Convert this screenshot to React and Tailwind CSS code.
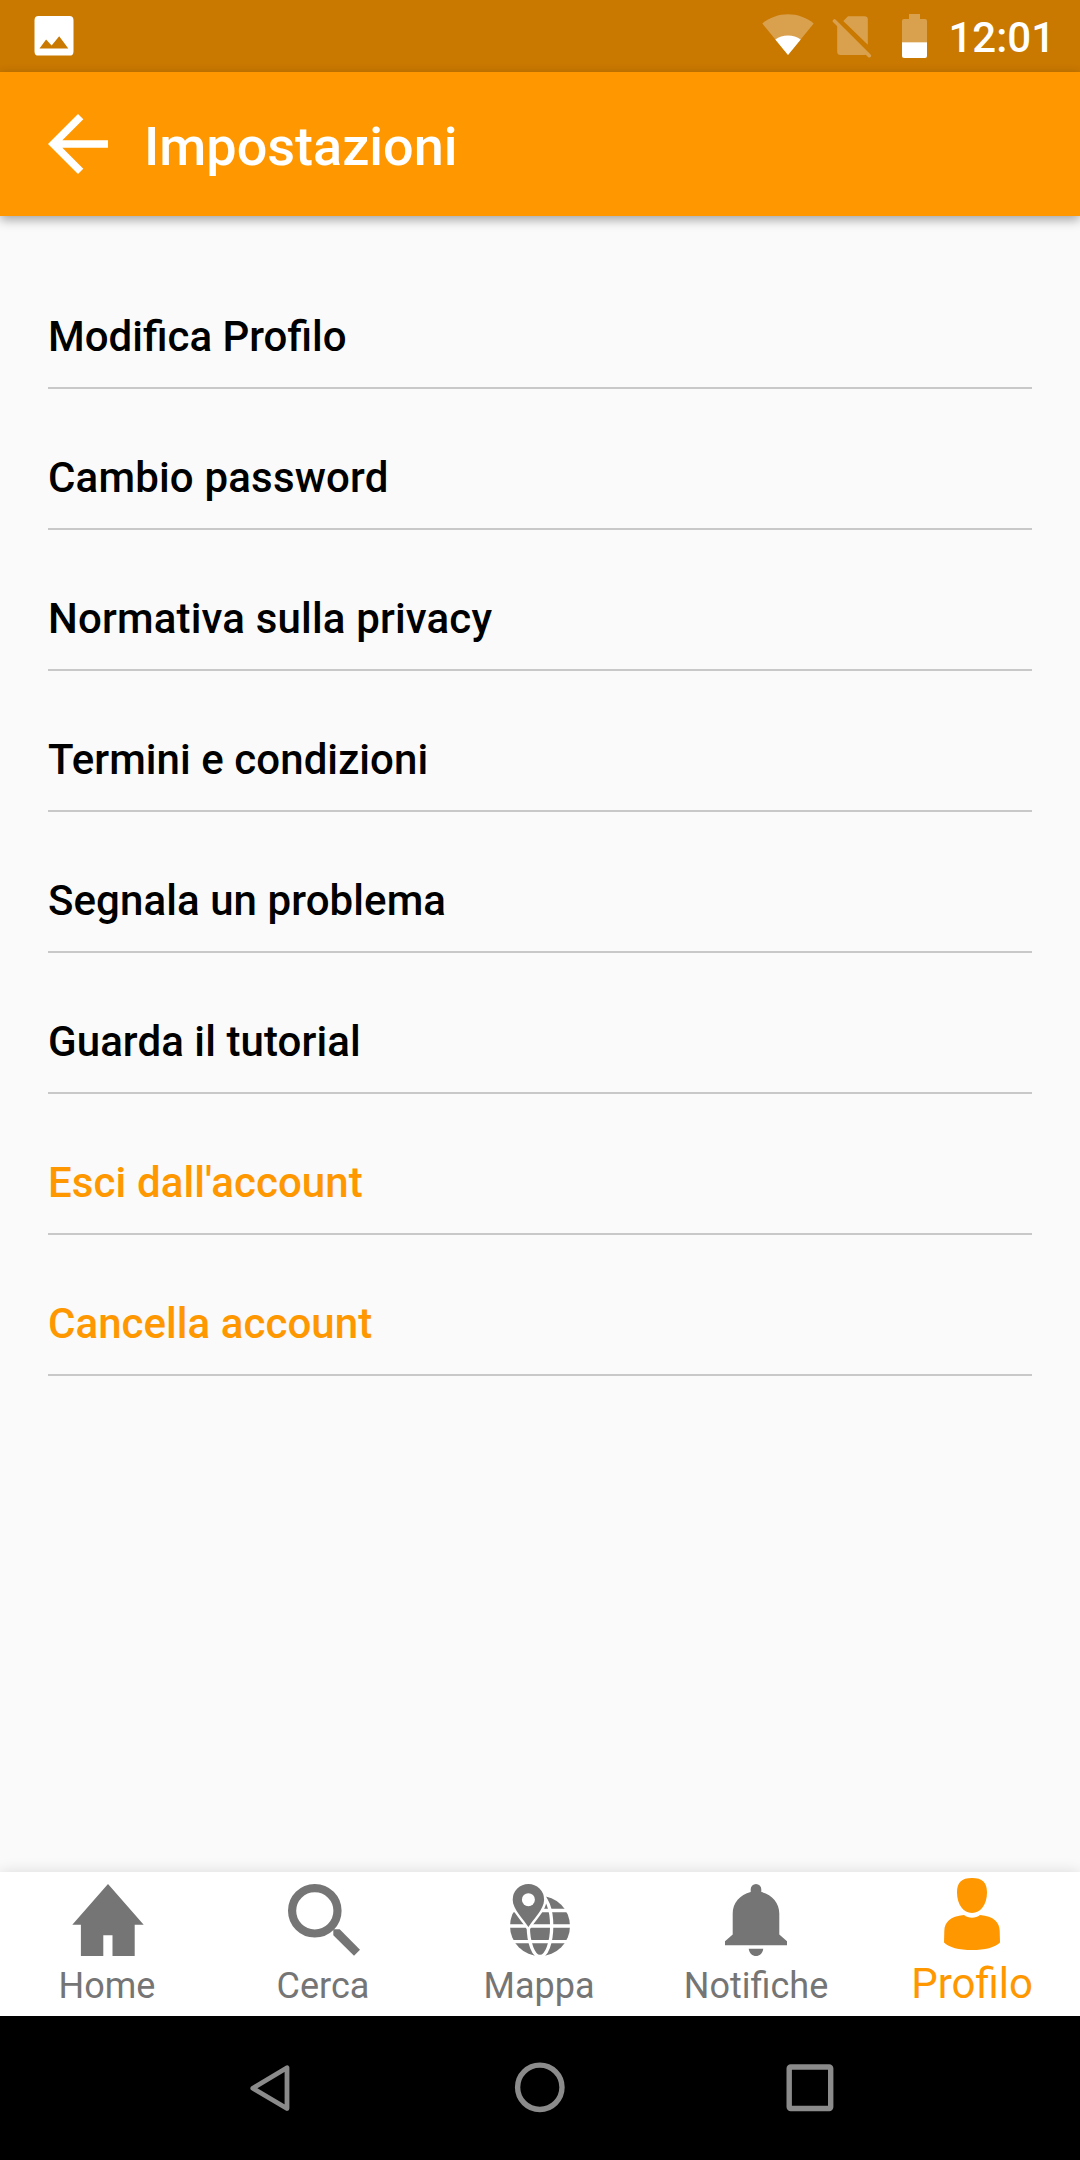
const rows = [
  { label: "Modifica Profilo", style: "text-black" },
  { label: "Cambio password", style: "text-black tracking-[0.18px]" },
  { label: "Normativa sulla privacy", style: "text-black tracking-[0.17px]" },
  { label: "Termini e condizioni", style: "text-black tracking-[0.06px]" },
  { label: "Segnala un problema", style: "text-black tracking-[0.08px]" },
  { label: "Guarda il tutorial", style: "text-black tracking-[0.08px]" },
  { label: "Esci dall'account", style: "text-[#ff9800] tracking-[0.1px]" },
  { label: "Cancella account", style: "text-[#ff9800] tracking-[0.05px]" },
];

function StatusBar() {
  return (
    <div className="flex h-[72px] items-start bg-[#c97800] text-white">
      <svg className="ml-[34px] mt-4 h-10 w-10" viewBox="0 0 40 40">
        <path
          fill="currentColor"
          fillRule="evenodd"
          d="M4.5 0H35.5Q39.5 0 39.5 4.3V35.4Q39.5 39.6 35.5 39.6H4.5Q.5 39.6 .5 35.4V4.3Q.5 0 4.5 0ZM5.5 32.6H34.3L25.2 20.2 17.6 29.6 12.1 23.4Z"
        />
      </svg>
      <svg className="ml-auto mt-[14px] h-[42px] w-[52px]" viewBox="0 0 52 42">
        <path fill="#fff" fillOpacity=".3" d="M26 41 .3 9.4C7.5 3.5 16.5 .2 26 .2S44.5 3.5 51.7 9.4Z" />
        <path fill="#fff" d="M26 41 13.3 25.6C16.8 23 21.2 21.5 26 21.5S35.2 23 38.7 25.6Z" />
      </svg>
      <svg className="ml-[18px] mt-[14px] h-11 w-10" viewBox="0 0 40 44">
        <g fill="#fff" opacity=".3">
          <path d="M11.3 6.9 16 2.2H32.5Q35.8 2.2 35.8 5.5V30.7Z" />
          <path d="M5.2 9.6 35 39.700Q34 41 32 41H8.500Q5.200 41 5.200 37.500Z" />
          <path stroke="#fff" strokeWidth="3.6" strokeLinecap="round" d="M2.500 6.900 37.300 41.700" />
        </g>
      </svg>
      <svg className="ml-[29px] mt-[14px] h-11 w-[26px]" viewBox="0 0 26 44">
        <path fill="#fff" fillOpacity=".3" d="M8 0H19V5H24Q26 5 26 7V28.3H1V7Q1 5 3 5H8Z" />
        <path fill="#fff" d="M1 28.3H26V42Q26 44 24 44H3Q1 44 1 42Z" />
      </svg>
      <span className="ml-[21px] mr-[25px] mt-[13px] text-[42px] font-medium leading-[50px]">12:01</span>
    </div>
  );
}

function AppBar() {
  return (
    <header className="relative z-10 flex h-36 items-center bg-[#ff9800] pl-[33px] text-white shadow-[0_4px_10px_rgba(0,0,0,0.34)]">
      <svg className="h-[90px] w-[90px]" viewBox="0 0 24 24" fill="currentColor">
        <path d="M20 11H7.830l5.590-5.590L12 4l-8 8 8 8 1.410-1.410L7.830 13H20v-2z" />
      </svg>
      <h1 className="ml-[21px] mt-[6px] text-[54px] font-medium leading-[64px]">Impostazioni</h1>
    </header>
  );
}

function HomeIcon() {
  return <path d="M36 0 71.7 40.8H62.7V72H40.5V51.3H31.3V72H8.9V40.8H.3Z" />;
}

function SearchIcon() {
  return (
    <>
      <circle cx="26.8" cy="26.8" r="22.7" fill="none" stroke="currentColor" strokeWidth="8.2" />
      <path d="M45.3 45.3H51.7L72 65.7 66 71.7 45.3 51.2Z" />
    </>
  );
}

function MapIcon() {
  return (
    <>
      <circle cx="36" cy="42" r="30" />
      <g fill="none" stroke="#fff" strokeWidth="3.3">
        <path d="M5 26.5H67M5 42H67M5 57.6H67" />
        <ellipse cx="36" cy="42" rx="11.7" ry="30.5" />
      </g>
      <path
        stroke="#fff"
        strokeWidth="5"
        paintOrder="stroke"
        d="M24.4 43C20 35.500 8.700 25.500 8.700 15.700A15.700 15.700 0 0 1 40.100 15.700C40.100 25.500 28.800 35.500 24.400 43Z"
      />
      <circle cx="24.4" cy="15.7" r="6.5" fill="#fff" />
    </>
  );
}

function BellIcon() {
  return (
    <path d="M30.7 8V5.3A5.3 5.3 0 0 1 41.3 5.3V8C52 10.5 59.3 19 59.3 29.5V50.5L67 57.3V61.3H5V57.3L12.7 50.5V29.5C12.7 19 20 10.5 30.7 8ZM28.7 64.7H43.3C42.5 69.5 39.5 72 36 72S29.5 69.5 28.7 64.7Z" />
  );
}

function ProfileIcon() {
  return (
    <path d="M36 0C46.5 0 51 4.5 51 14.5C51 26.5 44.5 35 36 35S21 26.5 21 14.5C21 4.5 25.5 0 36 0ZM28 37C32.5 40.5 39.5 40.5 44 37C58 38.5 63.5 44 63.7 53L64 64.5C59 69.5 49 72 36 72S13 69.5 8 64.5L8.3 53C8.5 44 14 38.5 28 37Z" />
  );
}

const inactiveLabel = "mt-[9px] text-[36px] leading-[42px]";
const shiftedLabel = "mt-[9px] mr-[2px] text-[36px] leading-[42px]";
const activeLabel = "mt-[9px] text-[42px] leading-[50px]";

const tabs = [
  { label: "Home", Icon: HomeIcon, labelStyle: shiftedLabel },
  { label: "Cerca", Icon: SearchIcon, labelStyle: shiftedLabel },
  { label: "Mappa", Icon: MapIcon, labelStyle: shiftedLabel },
  { label: "Notifiche", Icon: BellIcon, labelStyle: inactiveLabel },
  { label: "Profilo", Icon: ProfileIcon, labelStyle: activeLabel, active: true },
];

function TabBar() {
  return (
    <nav className="grid h-36 grid-cols-5 bg-white shadow-[0_0_14px_rgba(0,0,0,0.13)]">
      {tabs.map(({ label, Icon, labelStyle, active }) => (
        <div
          key={label}
          className={
            active
              ? "flex flex-col items-center pt-1.5 text-[#ff9800]"
              : "flex flex-col items-center pt-3 text-[#757575]"
          }
        >
          <svg className="h-[72px] w-[72px]" viewBox="0 0 72 72" fill="currentColor">
            <Icon />
          </svg>
          <span className={labelStyle}>{label}</span>
        </div>
      ))}
    </nav>
  );
}

function SystemNav() {
  return (
    <div className="flex h-36 items-center justify-between bg-black px-[240px]">
      <svg className="h-[60px] w-[60px]" viewBox="0 0 60 60" fill="none" stroke="#8b8b8b" strokeWidth="4.8" strokeLinejoin="round">
        <path d="M12.8 30.2 47 9.7V50.5Z" />
      </svg>
      <svg className="h-[60px] w-[60px]" viewBox="0 0 60 60" fill="none" stroke="#8b8b8b" strokeWidth="5.4">
        <circle cx="29.8" cy="29.3" r="22.2" />
      </svg>
      <svg className="h-[60px] w-[60px]" viewBox="0 0 60 60" fill="none" stroke="#8b8b8b" strokeWidth="5.4">
        <rect x="9.2" y="9" width="41.5" height="41.5" rx="1.5" />
      </svg>
    </div>
  );
}

export default function App() {
  return (
    <div className="flex h-[2160px] w-[1080px] flex-col overflow-hidden bg-[#fafafa] font-['Roboto',sans-serif]">
      <StatusBar />
      <AppBar />
      <main className="flex-1 px-12 pt-8 text-[42px] font-medium leading-[50px]">
        {rows.map(({ label, style }) => (
          <div key={label} className="flex h-[141px] items-end border-b-2 border-[#c8c8c8] pb-[25px]">
            <span className={style}>{label}</span>
          </div>
        ))}
      </main>
      <TabBar />
      <SystemNav />
    </div>
  );
}
